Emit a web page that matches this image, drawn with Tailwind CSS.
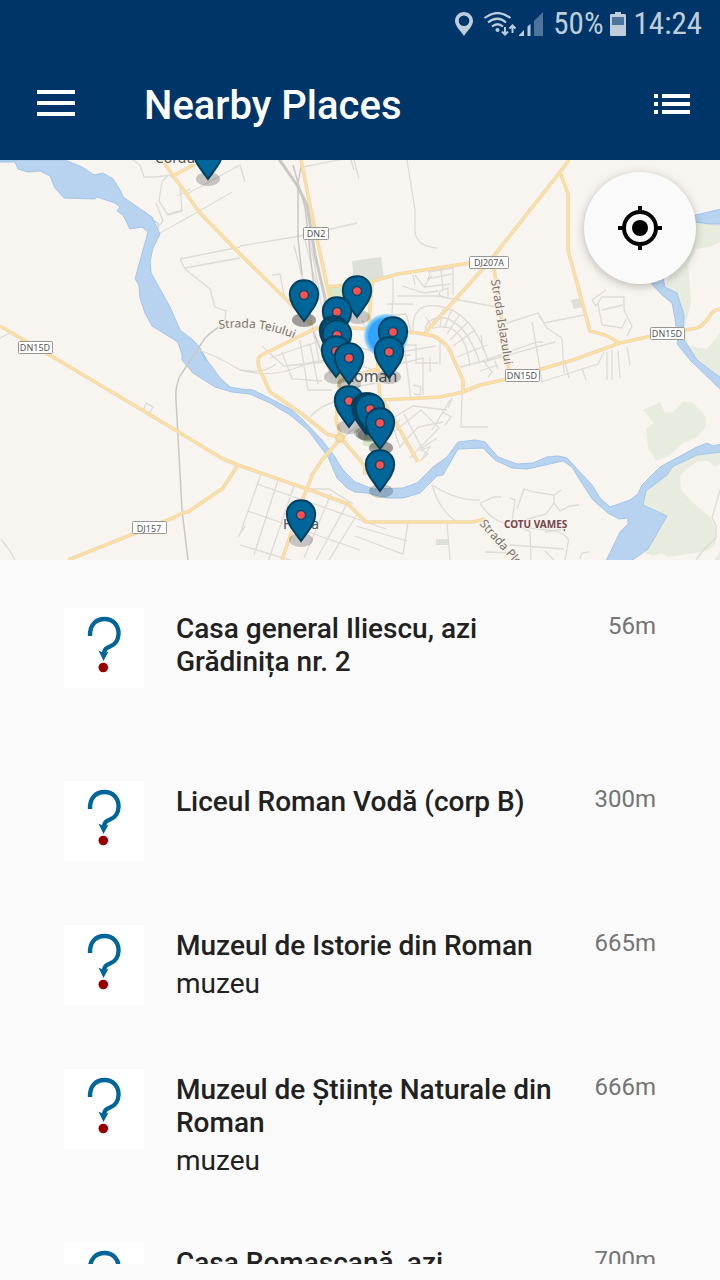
<!DOCTYPE html>
<html lang="en">
<head>
<meta charset="utf-8">
<meta name="viewport" content="width=device-width, initial-scale=1">
<title>Nearby Places</title>
<script src="https://cdn.jsdelivr.net/npm/@tailwindcss/browser@4"></script>
</head>
<body class="flex h-screen flex-col overflow-hidden bg-[#fafafa] font-[Roboto,sans-serif] text-[#212121]">
<svg class="hidden" aria-hidden="true">
  <symbol id="pin" viewBox="-16 -17 32 46" overflow="visible">
    <path d="M0-14.8C-8.500-14.800-14.200-8.500-14.200-.5C-14.200 9-6.500 16.500 0 26C6.500 16.500 14.200 9 14.200-.5C14.200-8.500 8.500-14.800 0-14.800Z" fill="#006699" stroke="#00405f" stroke-width="2"/>
    <circle r="4.500" fill="#ff5050" stroke="#064a6b" stroke-width="1.500"/>
  </symbol>
  <symbol id="question" viewBox="0 0 80 80">
    <path d="M26 28C25.500 17 32 11 40.500 11C49 11 55 17 54.500 26.500C54 34 50 37 46 38.500C42 40 40.500 41 39.800 46" fill="none" stroke="#006699" stroke-width="4.400"/>
    <path d="M34.500 42.500Q40 46 44.500 43.500L39.500 53Z" fill="#006699"/>
    <circle cx="39.300" cy="59.500" r="4.800" fill="#990000"/>
  </symbol>
</svg>

<header class="shrink-0 bg-[#003569] text-white">
  <div class="flex h-12 items-center justify-end pr-[18px] text-[31px] leading-9 text-[#bfcdda]">
    <svg class="mr-2.5 h-6 w-[18px]" viewBox="0 0 18 24" fill="currentColor" aria-label="Location"><path fill-rule="evenodd" d="M9 0C4 0 0 4 0 9C0 14 5 18 9 24C13 18 18 14 18 9C18 4 14 0 9 0ZM9 3.500A5.300 5.300 0 1 1 9 14.100A5.300 5.300 0 1 1 9 3.500Z"/></svg>
    <svg class="h-6 w-9" viewBox="0 0 36 24" fill="none" stroke="currentColor" stroke-width="2.200" aria-label="Wi-Fi"><path d="M1.500 6Q14.500-4 27.500 6M5 10.500Q14.500 3 23 10.500M9 14.500Q14.500 10 20 14.500"/><circle cx="14.500" cy="18" r="2" fill="currentColor" stroke="none"/><path d="M22 15v8M19 19.500l3 3 3-3M29.500 21v-8M26.500 16.500l3-3 3 3" stroke-width="2"/></svg>
    <svg class="h-6 w-6" viewBox="0 0 24 24" aria-label="Signal"><path d="M0 24v-1l5-5v6ZM8.500 24v-9.500l3-2.500v12Z" fill="#bfcdda"/><path d="M15 24V9l9-9v24Z" fill="#4d759c"/></svg>
    <span class="ml-2.5 font-['Roboto_Condensed',Roboto,sans-serif]">50%</span>
    <svg class="ml-1.5 h-6 w-4" viewBox="0 0 16 24" aria-label="Battery"><path d="M0 3.500Q0 2 1 2H5V0H11V2H15Q16 2 16 3.500V23Q16 24 15 24H1Q0 24 0 23Z" fill="#bfcdda"/><path d="M2 5h12v8H2Z" fill="#4d759c"/></svg>
    <time class="ml-2 font-['Roboto_Condensed',Roboto,sans-serif]">14:24</time>
  </div>
  <div class="flex h-28 items-center pr-[30px] pl-[37px]">
    <button type="button" aria-label="Menu" class="-mt-0.5"><svg class="h-[26px] w-[38px]" viewBox="0 0 38 26" fill="currentColor"><path d="M0 0h38v4H0zM0 11h38v4H0zM0 22h38v4H0z"/></svg></button>
    <h1 class="ml-[69px] flex-1 pt-1 text-[40px] leading-[52px] font-medium">Nearby Places</h1>
    <button type="button" aria-label="Show list"><svg class="h-5 w-9" viewBox="0 0 36 20" fill="currentColor"><path d="M0 0h4v4H0zM8 0h28v4H8zM0 8h4v4H0zM8 8h28v4H8zM0 16h4v4H0zM8 16h28v4H8z"/></svg></button>
  </div>
</header>

<section class="relative h-[400px] shrink-0 overflow-hidden bg-[#f8f4f0]" aria-label="Map of nearby places">
  <svg class="h-full w-full" viewBox="0 160 720 400" preserveAspectRatio="xMidYMid slice" font-family="Noto Sans, sans-serif">
    <!-- parks and woodland -->
    <g fill="#e8ecdf">
      <path d="M665 285L695 222 720 224V242L710 247 696 249 688 265 691 302 685 328 688 345 698 348 707 349 720 333V379L697 360 683 338 684 315 677 293Z"/>
      <path d="M643 410L660 402 665 413 673 412 684 401 693 403 706 417V427L697 437 683 443 670 455 656 461 648 447 646 429 654 423Z"/>
      <path d="M672 467L697 455 720 452V464L715 467 708 461 698 461 685 470 680 477 681 490 693 503 710 517 717 533 715 545 707 551 687 554 668 557 662 553 653 556 643 552 667 516 643 505 646 491 667 475Z"/>
      <path d="M720 552v8h-6Z"/>
    </g>
    <path d="M352 261L381 257 384 278 354 284ZM571 300l9-2 3 9-9 2ZM436 539h12v6h-12Z" fill="#dce0d9"/>
    <path d="M329 288l20-2 3 34-14 4ZM364 435l20 6-8 8-13-4Z" fill="#d8e8c8"/>

    <!-- rivers -->
    <g fill="#b7d3ef" stroke="#a2c5e9" stroke-width="1">
      <path d="M0 160H65L82 167 94 175 103 173 113 179 120 190 123 197 152 217 160 234 153 248 150 262 151 273 170 307 180 330 193 340 200 348 207 360 220 378 230 387 240 389 253 390 277 402 292 410 303 420 322 440 335 457 343 470 355 482 373 489 403 488 417 483 433 467 447 457 458 442 475 440 485 442 498 457 517 464 533 463 547 457 558 456 567 458 592 485 600 498 610 507 630 500 638 494 642 485 660 467 695 448 707 443 713 446 721 444V452L697 455 672 467 667 475 646 491 643 505 667 516 648 549 631 561H606L620 532 628 524V518L619 519 608 513 593 500 578 477 572 467 563 461 527 469 512 468 495 460 483 448 458 449 443 475 437 476 420 493 403 498 387 498 367 493 355 492 347 488 337 478 328 457 308 430 290 415 270 403 250 394 232 392 215 387 193 373 182 360 182 355 178 342 152 326 145 313 140 298 139 285 135 279 148 232 142 227 130 229 123 215 117 211 120 207 115 203 97 197 95 199 64 198 55 188 50 176 40 171 28 172 18 169 15 162 0 162Z"/>
      <path d="M721 209L696 215 670 230 655 260 651 283 662 295 672 303 675 318 678 345 690 360 721 390V378L697 360 683 338 684 315 677 293 665 287 663 278 670 250 695 222 710 224 721 224Z"/>
      <path d="M152 220l6 3v6M200 350l6 12" fill="none"/>
    </g>

    <!-- minor streets -->
    <g fill="none" stroke="#dedad6" stroke-width="1.300">
      <path d="M133 160l7 5 4 12 12 0 14-2 10 10 2 26-14 4-9-14 3-20 6-5M156 203l7 18-5 6M178 196l12-7M160 233l36-20 36-21M187 194l53-29M168 214l14-4M180 259l60-12M185 268l55-10M180 259l5 10 20 16 5 4 5 18 11 4-2 16"/>
      <path d="M240 246l60-10 57-13M303 167l45-9M351 160l3 10M354 160l5 19M407 160l8 50 0 20q0 16 22 18M240 165l5 17M294 245l8 32M305 240l15 60M308 230l20 110M301 270l18 90M272 275l8-1 4 22"/>
      <path d="M199 350q18 6 41 20 30 8 56-2 16-7 30-8M240 370q24 4 36-6M0 338l10-5M143 411l3-8 7 4-4 7M1 539l9 12 5 9M238 537l7-11"/>
      <path d="M262 346l22 20 40-4M270 358l40-14 8 40M282 352l10 27 30 2M300 340l8 50h24M306 346l14-5M310 417q10-12 28-16"/>
      <path d="M393 278v20l-4 60M397 296h40l60 11M388 304h25M386 316l20-2 6 20M402 286l22 7 14-2M413 275l2 10M415 275l9 12 8-12M430 273l-2 7M428 272l25-4 0 27M441 270l2 20M427 279l25-5M424 287l27-3M440 291l8-3v10l-9-3Z"/>
      <path d="M413 332q-2-30 25-26 35 5 50 55M425 330q3-14 20-12 22 6 35 45M434 328q30-8 36 38M426 317l7 12M443 309l-3 17M460 314l-13 20M475 330l-22 16M487 345l-30 12M492 359l-32 8M452 309l-8 19M468 322l-18 18"/>
      <path d="M378 345h38v18h22M384 357l27-2M395 365l28-7v37M403 335l8 65M430 372v-15M440 340v25M362 320l20 40M350 345l45 12M345 361l40 12M350 388l30-6M340 410l30-12M338 395l40 4M322 460l18-20 20-16M413 385l8 2-1 8-6-1M400 352l36-6"/>
      <path d="M385 405l15 42 18-20 25-5M388 421l25-15 34 4M395 431l26-21 18 18-29 30M404 414l18 34 15-10M380 440l20-20M420 450l10-3-9 13M450 400l-18 30M443 412l8 5-6 8M452 398l-4 10M462 392l-1 35h19M422 450l6 4-8 7"/>
      <path d="M240 545l60 18M257 484l129 45M248 511l112 39M261 474l-21 60M278 480l-24 75M294 486l-26 76M307 489h22l24 15M331 494l-27 64M347 504l-31 56M358 513l-29 47M408 523l-5 31-48-18M432 485q7 25 25 37M432 485q25 16 48 15M447 523l3 37M356 526l51 15"/>
      <path d="M480 362l57-20 6 0M483 350l-2-15M497 333l4-8 37-12 6 10 40-8M532 322l8 47M539 316l8 12 15 10 2 35M483 362l72-20M541 382l57-18 6-12M565 362l4 16M582 368l4 12M592 300l10-7 4-3M592 300l4 6 6-9h22v13l8 16-5 10M598 304l4 21 20 3 4-9M602 310l21-5M542 382l-2-12M607 352v28M612 350v30M618 350l2 28M627 347l3 18"/>
      <path d="M480 427h8M480 371l18-6M483 360l9 12-4 5M495 361l3 8M480 503l14-6h7M480 503q10 16 24 20l10-3M510 498l5 2-3 22 18 10 1 28M517 509l7-20 10 3 20 3v8l6 8 10-5 9-1M554 495l7-5M554 503l-8 11-25 7M530 528l26 3q15 6 12 12l-3 17M545 532l20-3M510 545l54 4M485 552l30 1M580 559l2-6 7-1M545 551l12 12M720 490l-8 28 4 8v12l-12 11-8 11"/>
    </g>

    <!-- railways -->
    <g fill="none" stroke="#c9c8c5">
      <path d="M279 159L297 185 307 205 315 255 325 298 326 340" stroke-width="3"/>
      <path d="M301 167L298 183 298 238 302 275M293 165l12 42 10 90" stroke-width="1.500"/>
      <path d="M223 325Q207 333 201 344L180 376Q175 387 176 400L182 510 188 560M312 328l18 45" stroke-width="1.500"/>
    </g>

    <!-- main roads: casing, then fill -->
    <defs>
      <path id="roads" d="M301 160L313 220 328 290 338 330 340 380 336 420 341 438M162 160L200 213 240 254 312 325M173 176L195 164M0 326L27 342 58 360 147 413 223 459 238 465 307 489 348 504 366 522 473 522 485 519M238 465L223 488 188 512 182 513 175 517 163 522 68 560M341 438L322 460 312 475 307 489 303 498 282 560M341 438L359 459 365 467V475M341 438L327 434 302 414 270 392 260 370Q256 360 260 356L298 337 317 328 353 328 418 333 433 336Q448 342 453 358L463 380V392M383 400L440 397 463 392 480 385 507 379 573 360 620 343 647 337 697 328Q704 325 709 317 713 310 720 309M328 287L370 282 398 274 470 263 493 257 560 172 569 160M425 333L480 272 493 257M560 172L568 194V250L590 331 605 335 620 343M493 262L500 310 510 378M369 322L372 282M377 350L380 400M383 400L410 448 418 462M340 380L378 369"/>
    </defs>
    <g fill="none" stroke-linejoin="round">
      <use href="#roads" stroke="#ecd6b4" stroke-width="3.600"/>
      <use href="#roads" stroke="#fbe0a0" stroke-width="2.200"/>
      <circle cx="340" cy="438" r="4" stroke="#f0d498" stroke-width="2"/>
    </g>

    <!-- road number shields -->
    <g fill="#fff" stroke="#9b9691">
      <rect x="18.500" y="341.500" width="34" height="12" rx="1"/><rect x="303.500" y="227.500" width="25" height="12" rx="1"/><rect x="469.500" y="256.500" width="39" height="12" rx="1"/><rect x="650.500" y="327.500" width="34" height="12" rx="1"/><rect x="505.500" y="369.500" width="34" height="12" rx="1"/><rect x="132.500" y="521.500" width="34" height="12" rx="1"/>
    </g>
    <g fill="#555" font-size="9" text-anchor="middle">
      <text x="35" y="351">DN15D</text><text x="316" y="237">DN2</text><text x="489" y="266">DJ207A</text><text x="667" y="337">DN15D</text><text x="522" y="379">DN15D</text><text x="149" y="532">DJ157</text>
    </g>

    <!-- street and place names -->
    <defs><path id="teiului" d="M219 329Q260 323 300 341"/><path id="islazului" d="M491 280L506 375"/><path id="plopilor" d="M479 524L529 580"/></defs>
    <g fill="#7d7268" font-size="12" stroke="#f8f4f0" stroke-width="2" paint-order="stroke">
      <text><textPath href="#teiului">Strada Teiului</textPath></text>
      <text><textPath href="#islazului">Strada Islazului</textPath></text>
      <text><textPath href="#plopilor">Strada Plopilor</textPath></text>
    </g>
    <g fill="#555" stroke="#f8f4f0" stroke-width="2" paint-order="stroke">
      <text x="155" y="163" font-size="14">Cordun</text>
      <text x="344" y="382" font-size="16">Roman</text>
      <text x="283" y="529" font-size="14">Horia</text>
      <text x="504" y="528" font-size="10" font-weight="700" fill="#74434a">COTU VAMEȘ</text>
    </g>

    <!-- current position -->
    <defs><radialGradient id="here"><stop offset=".75" stop-color="#30a4ff"/><stop offset=".9" stop-color="#6cc8ff" stop-opacity=".8"/><stop offset="1" stop-color="#8fdcff" stop-opacity="0"/></radialGradient></defs>
    <circle cx="386" cy="336" r="23" fill="url(#here)"/>

    <!-- marker shadows, then markers from north to south -->
    <g fill="#000" fill-opacity=".2">
      <ellipse cx="208" cy="179" rx="12" ry="7"/><ellipse cx="304" cy="320" rx="12" ry="7"/><ellipse cx="304" cy="320" rx="12" ry="7"/><ellipse cx="358" cy="317" rx="12" ry="7"/><ellipse cx="389" cy="377" rx="12" ry="7"/><ellipse cx="336" cy="377" rx="12" ry="7"/><ellipse cx="349" cy="384" rx="12" ry="7"/><ellipse cx="349" cy="427" rx="12" ry="7"/><ellipse cx="366" cy="433" rx="12" ry="7"/><ellipse cx="368" cy="434" rx="12" ry="7"/><ellipse cx="370" cy="435" rx="12" ry="7"/><ellipse cx="381" cy="448" rx="12" ry="7"/><ellipse cx="381" cy="448" rx="12" ry="7"/><ellipse cx="381" cy="491" rx="12" ry="7"/><ellipse cx="301" cy="540" rx="12" ry="7"/>
    </g>
    <g>
      <use href="#pin" x="192" y="136" width="32" height="46"/>
      <use href="#pin" x="341" y="274" width="32" height="46"/>
      <use href="#pin" x="288" y="278" width="32" height="46"/>
      <use href="#pin" x="321" y="295" width="32" height="46"/>
      <use href="#pin" x="318" y="314" width="32" height="46"/>
      <use href="#pin" x="319" y="316" width="32" height="46"/>
      <use href="#pin" x="321" y="318" width="32" height="46"/>
      <use href="#pin" x="377" y="315" width="32" height="46"/>
      <use href="#pin" x="320" y="334" width="32" height="46"/>
      <use href="#pin" x="373" y="335" width="32" height="46"/>
      <use href="#pin" x="333" y="341" width="32" height="46"/>
      <use href="#pin" x="333" y="384" width="32" height="46"/>
      <use href="#pin" x="350" y="391" width="32" height="46"/>
      <use href="#pin" x="352" y="391" width="32" height="46"/>
      <use href="#pin" x="354" y="392" width="32" height="46"/>
      <use href="#pin" x="364" y="406" width="32" height="46"/>
      <use href="#pin" x="364" y="448" width="32" height="46"/>
      <use href="#pin" x="285" y="498" width="32" height="46"/>
    </g>
  </svg>
  <button type="button" aria-label="My location" class="absolute top-3 right-6 flex size-28 items-center justify-center rounded-full bg-[#fafafa] text-black shadow-[0_2px_10px_rgba(0,0,0,0.25)]">
    <svg class="size-11" viewBox="0 0 44 44" fill="none" stroke="currentColor" stroke-width="4"><circle cx="22" cy="22" r="16"/><path d="M22 0v6M22 38v6M0 22h6M38 22h6"/><circle cx="22" cy="22" r="8" fill="currentColor" stroke="none"/></svg>
  </button>
</section>

<main class="mb-4 min-h-0 flex-1 overflow-hidden">
  <ul class="flex flex-col gap-16 px-16 pt-12 text-[28px]">
    <li class="flex items-start">
      <svg class="size-20 shrink-0 bg-white" aria-hidden="true"><use href="#question"/></svg>
      <div class="ml-8 min-w-0 flex-1 pt-1"><h2 class="max-w-[380px] leading-[33px] font-medium">Casa general Iliescu, azi Grădinița nr. 2</h2><p class="h-[39px]"></p></div>
      <span class="pt-1 text-2xl leading-7 text-[#757575]">56m</span>
    </li>
    <li class="flex items-start">
      <svg class="size-20 shrink-0 bg-white" aria-hidden="true"><use href="#question"/></svg>
      <div class="ml-8 min-w-0 flex-1 pt-1"><h2 class="max-w-[380px] leading-[33px] font-medium">Liceul Roman Vodă (corp B)</h2><p class="h-[39px]"></p></div>
      <span class="pt-1 text-2xl leading-7 text-[#757575]">300m</span>
    </li>
    <li class="flex items-start">
      <svg class="size-20 shrink-0 bg-white" aria-hidden="true"><use href="#question"/></svg>
      <div class="ml-8 min-w-0 flex-1 pt-1"><h2 class="max-w-[380px] leading-[33px] font-medium">Muzeul de Istorie din Roman</h2><p class="pt-1 leading-[35px]">muzeu</p></div>
      <span class="pt-1 text-2xl leading-7 text-[#757575]">665m</span>
    </li>
    <li class="flex items-start">
      <svg class="size-20 shrink-0 bg-white" aria-hidden="true"><use href="#question"/></svg>
      <div class="ml-8 min-w-0 flex-1 pt-1"><h2 class="max-w-[380px] leading-[33px] font-medium">Muzeul de Științe Naturale din Roman</h2><p class="pt-1 leading-[35px]">muzeu</p></div>
      <span class="pt-1 text-2xl leading-7 text-[#757575]">666m</span>
    </li>
    <li class="flex items-start">
      <svg class="size-20 shrink-0 bg-white" aria-hidden="true"><use href="#question"/></svg>
      <div class="ml-8 min-w-0 flex-1 pt-1"><h2 class="max-w-[380px] leading-[33px] font-medium">Casa Romașcană, azi</h2></div>
      <span class="pt-1 text-2xl leading-7 text-[#757575]">700m</span>
    </li>
  </ul>
</main>
</body>
</html>
